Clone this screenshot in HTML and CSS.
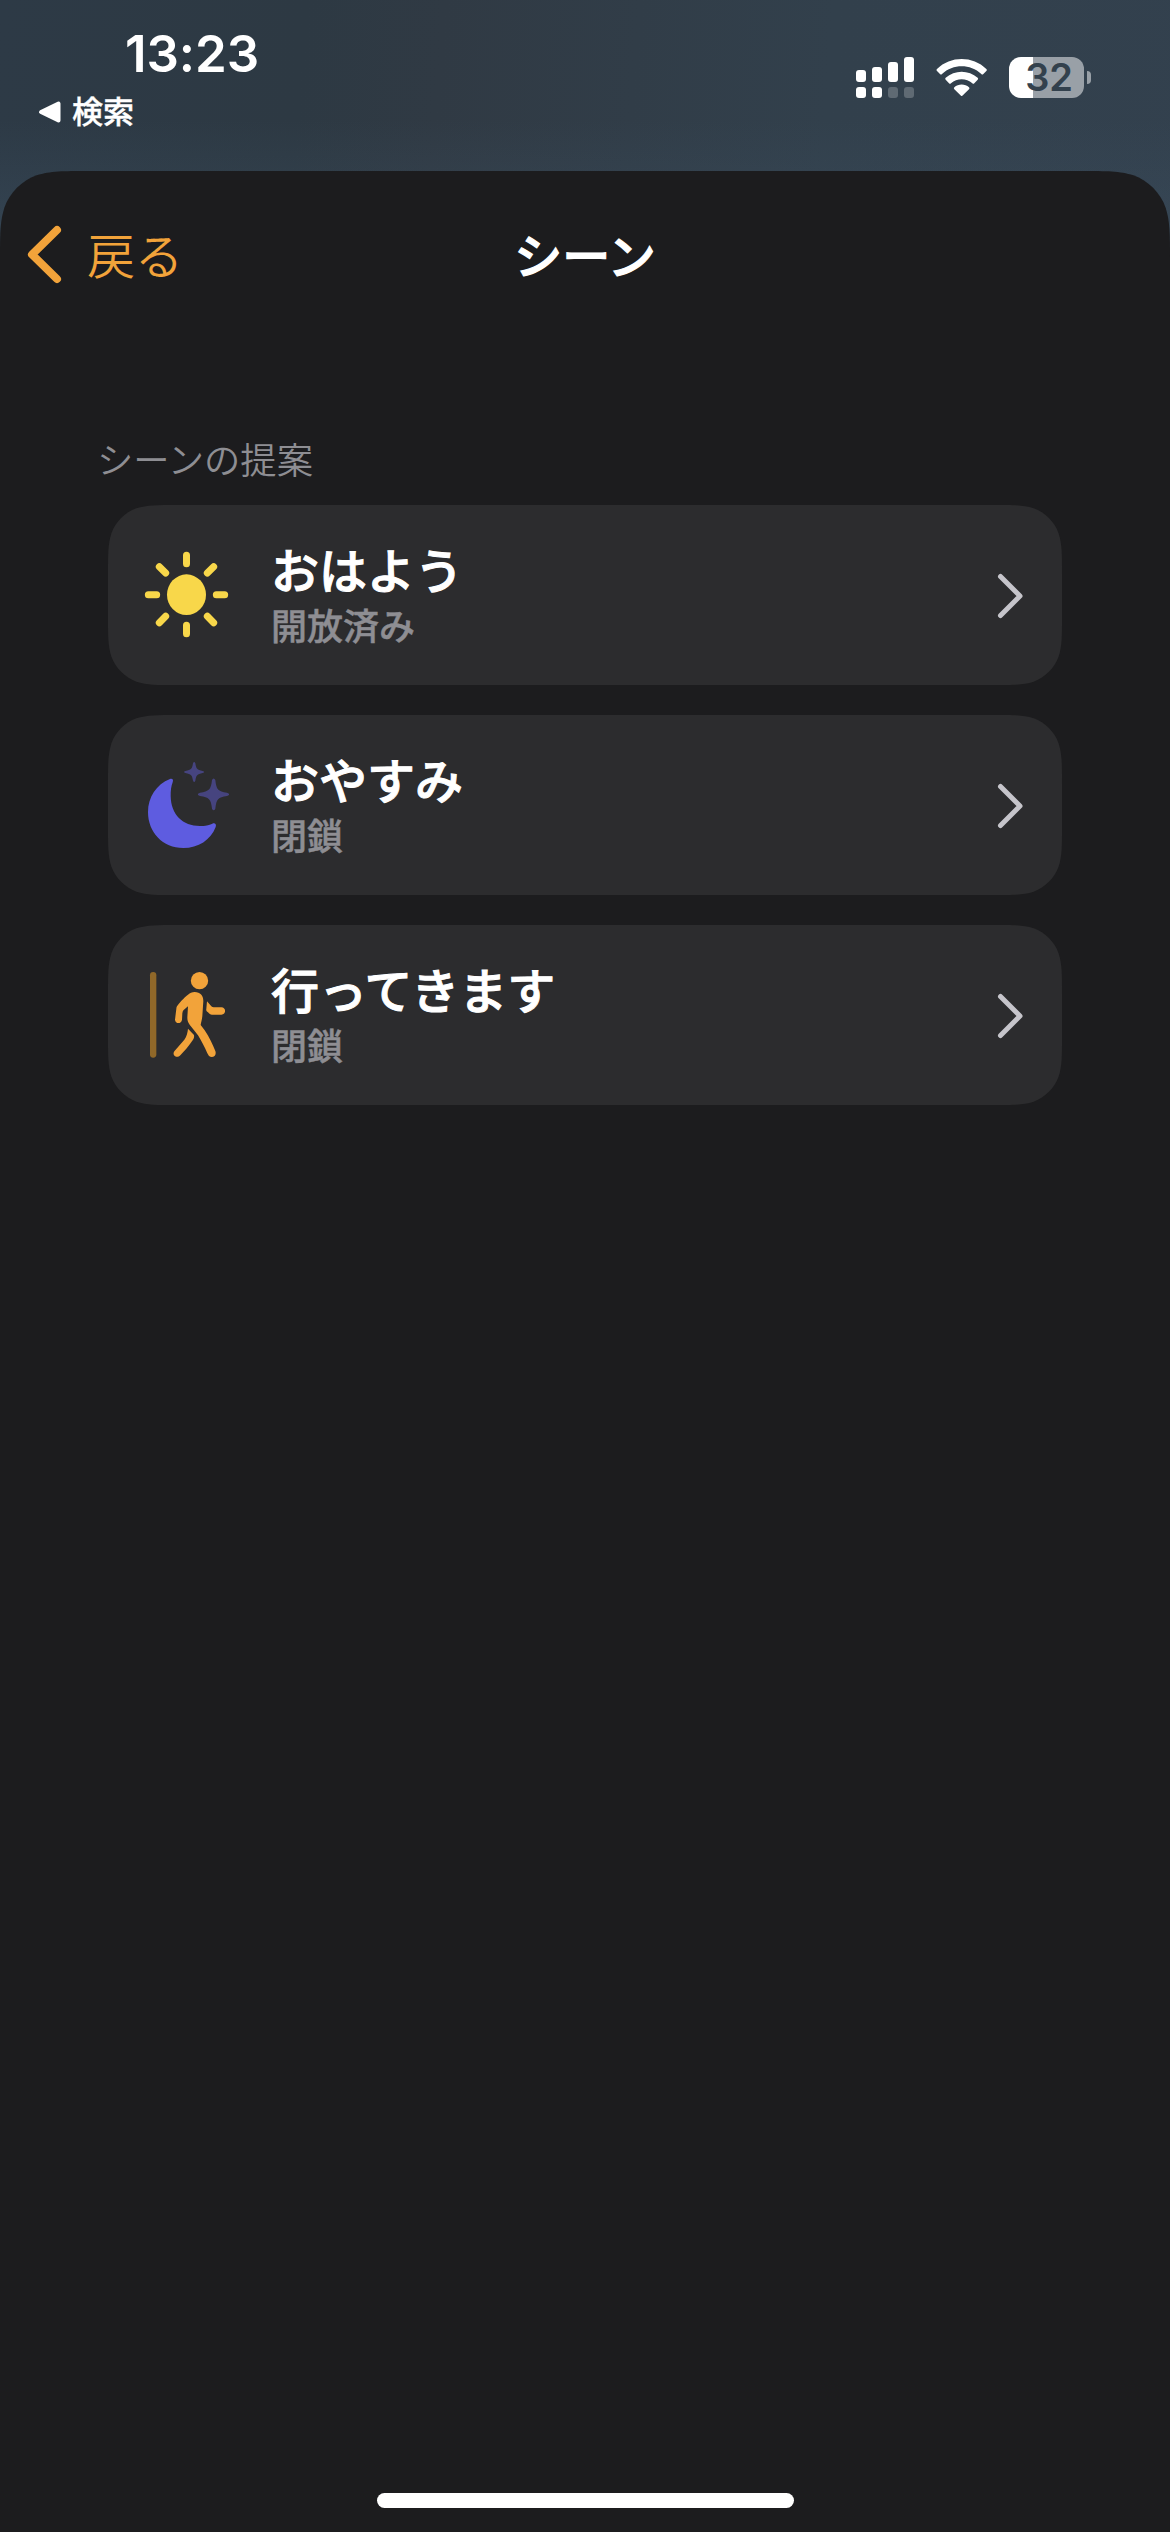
FILE: index.html
```html
<!DOCTYPE html>
<html lang="ja">
<head>
<meta charset="utf-8">
<title>シーン</title>
<link rel="stylesheet" href="styles.css">
</head>
<body>
<div class="screen">
  <header class="status">
    <div class="status-left">
      <div class="clock">13:23</div>
      <div class="return">
        <svg width="24" height="24" viewBox="0 0 24 24"><path d="M3 12 L20.500 3.500 V20.500 Z" fill="#fff" stroke="#fff" stroke-width="4" stroke-linejoin="round"/></svg>
        <span>検索</span>
      </div>
    </div>
    <div class="status-right">
      <svg width="58" height="41" viewBox="0 0 58 41" fill="#fff">
        <rect x="0" y="13" width="10" height="12" rx="3"/><rect x="16" y="10" width="10" height="15" rx="3"/><rect x="32" y="5" width="10" height="20" rx="3"/><rect x="48" y="0" width="10" height="25" rx="3"/>
        <rect x="0" y="30" width="10" height="11" rx="3"/><rect x="16" y="30" width="10" height="11" rx="3"/><rect x="32" y="30" width="10" height="11" rx="3" opacity=".22"/><rect x="48" y="30" width="10" height="11" rx="3" opacity=".22"/>
      </svg>
      <svg class="wifi" width="51" height="41" viewBox="468 171 153 123" fill="#fff">
        <path d="M471 207 C512 167 578 167 619 207 Q622 210 619 213 L610 222 Q607 225 604 222 C571 191 519 191 486 222 Q483 225 480 222 L471 213 Q468 210 471 207Z"/>
        <path d="M497 233 C524 209 566 209 593 233 Q596 236 593 239 L583 250 Q580 253 577 250 C559 234 531 234 513 250 Q510 253 507 250 L497 239 Q494 236 497 233Z"/>
        <path d="M523 262 C535 251 555 251 567 262 Q570 265 567 268 L547 287 Q545 289 543 287 L523 268 Q520 265 523 262Z"/>
      </svg>
      <div class="battery"><div class="battery-body">32</div><div class="battery-tip"></div></div>
    </div>
  </header>
  <main class="sheet">
    <nav class="nav">
      <div class="back">
        <svg width="38" height="62" viewBox="0 0 38 62"><path d="M31 7 L6 31.500 L31 56" fill="none" stroke="#f2a33a" stroke-width="8" stroke-linecap="round" stroke-linejoin="round"/></svg>
        <span>戻る</span>
      </div>
      <h1 class="title">シーン</h1>
    </nav>
    <section class="scenes">
      <h2 class="label">シーンの提案</h2>
      <div class="card">
        <svg class="icon" viewBox="186 390 270 270">
          <ellipse cx="319.500" cy="524" rx="58.500" ry="61" fill="#f8d74a"/>
          <path d="M319.500 406 V431 M319.500 616 V641 M205 524 H230 M409 524 H434 M238 440 L257 459 M401 440 L382 459 M238 608 L257 589 M401 608 L382 589" stroke="#f8d74a" stroke-width="21" stroke-linecap="round"/>
        </svg>
        <div class="text"><div class="name">おはよう</div><div class="state">開放済み</div></div>
        <svg class="chevron" viewBox="0 0 30 50"><path d="M4.500 6.500 L24 26 L4.500 45.500"/></svg>
      </div>
      <div class="card">
        <svg class="icon" viewBox="66 120 270 270">
          <path d="M150 177 C158 175 161 180 158 187 C153 200 152 213 152 228 C153 284 188 318 240 318 C256 318 267 315 277 311 C285 308 290 313 287 321 C272 360 235 384 190 384 C128 384 84 337 84 276 C84 232 109 193 150 177Z" fill="#5e5ce0"/>
          <g fill="#46447f">
            <path d="M219 130 Q222.500 122 226 130 C229 148 231 149 248 153 Q257 156.500 248 159 C231 163 229 165 226 182 Q222.500 190 219 182 C216 165 214 163 196 159 Q188 156.500 196 153 C214 149 216 148 219 130Z"/>
            <path d="M276 180 Q281 171 286 180 C289 209 294 214 321 218 Q334 223 321 228 C294 232 289 237 286 266 Q281 275 276 266 C273 237 267 232 240 228 Q227 223 240 218 C267 214 273 209 276 180Z"/>
          </g>
        </svg>
        <div class="text"><div class="name">おやすみ</div><div class="state">閉鎖</div></div>
        <svg class="chevron" viewBox="0 0 30 50"><path d="M4.500 6.500 L24 26 L4.500 45.500"/></svg>
      </div>
      <div class="card">
        <svg class="icon" viewBox="66 120 270 270">
          <rect x="90" y="126" width="19" height="257" rx="9.500" fill="#906829"/>
          <g fill="#f2a33a">
            <circle cx="238.500" cy="152" r="26"/>
            <path d="M224 186 C241 186 250 197 250 213 L247 258 C246 270 243 277 242 285 L254 301 C268 322 279 345 286 363 C291 376 278 386 267 378 L262 370 C254 350 244 333 234 316 L209 284 C203 276 202 270 202 262 L204 229 L191 240 C188 243 188 246 187 250 L186 269 C184 283 166 282 165 269 L169 236 C169 231 172 227 176 222 C186 210 202 193 213 188 Q218 186 224 186Z"/>
            <path d="M204 296 L222 315 C223 321 222 325 218 331 C207 348 194 362 181 376 C170 387 155 376 163 364 L193 329 C200 320 203 307 204 296Z"/>
            <path d="M261 214 L274 229 Q277 232 281 232 L304 232 C319 232 319 254 304 254 L276 254 C271 254 268 251 264 247 C259 243 258 241 259 236Z"/>
          </g>
        </svg>
        <div class="text"><div class="name">行ってきます</div><div class="state">閉鎖</div></div>
        <svg class="chevron" viewBox="0 0 30 50"><path d="M4.500 6.500 L24 26 L4.500 45.500"/></svg>
      </div>
    </section>
    <div class="home"></div>
  </main>
</div>
</body>
</html>
```
FILE: styles.css
```css
* { box-sizing: border-box; margin: 0; }
body { background: #2e3a44; font-family: "Noto Sans CJK JP", sans-serif; color: #fff; }
svg { display: block; flex: none; }
.screen {
  width: 1170px; height: 2532px; display: flex; flex-direction: column;
  background: linear-gradient(180deg, rgba(58,76,92,0) 0, rgba(58,76,92,0) 120px, rgba(58,76,92,.6) 250px),
    linear-gradient(95deg, #2d3a46 0, #2d3943 22%, #303a44 32%, #32404c 60%, #33414f 100%);
}
.status { height: 171px; display: flex; justify-content: space-between; }
.status-left { padding: 24px 0 0 38px; }
.clock { padding-left: 87px; font: 600 51px/60px Inter, sans-serif; letter-spacing: -0.1px; }
.return { display: flex; align-items: center; gap: 10px; margin-top: 6px; font-size: 31px; line-height: 40px; font-weight: 500; -webkit-text-stroke: 0.4px; }
.return svg { margin-top: 3px; }
.status-right { display: flex; padding: 57px 79px 0 0; height: 98px; }
.wifi { margin: 0 22px; }
.battery { display: flex; align-items: center; gap: 3px; }
.battery-body {
  width: 75px; height: 41px; border-radius: 12px; padding-left: 5px; text-align: center;
  background: linear-gradient(90deg, #fff 24px, #99a0a7 24px);
  color: #33414d; font: 600 38px/41px Inter, sans-serif; letter-spacing: -0.3px;
}
.battery-tip { width: 4px; height: 13px; border-radius: 0 6px 6px 0; background: #99a0a7; }
.sheet {
  flex: 1; display: flex; flex-direction: column; background: #1c1c1e;
  clip-path: path("M0 88.660 C0 63.130 0 50.370 4.340 36.630 C9.810 21.620 21.620 9.810 36.630 4.340 C50.370 0 63.130 0 88.660 0 H1081.340 C1106.870 0 1119.630 0 1133.370 4.340 C1148.380 9.810 1160.190 21.620 1165.660 36.630 C1170 50.370 1170 63.130 1170 88.660 V2361 H0Z");
}
.nav { height: 163px; display: grid; grid-template-columns: 1fr auto 1fr; align-items: center; padding: 0 26px; line-height: 68px; }
.back { display: flex; align-items: center; gap: 23px; color: #f2a33a; font-size: 48px; font-weight: 350; }
.back svg { margin-top: 3px; }
.title { font-size: 48px; font-weight: 500; -webkit-text-stroke: 1.2px; }
.scenes { padding: 94px 108px 0; display: flex; flex-direction: column; gap: 30px; }
.label { margin: 0 0 -10px -11px; font-size: 36.3px; line-height: 60px; height: 57px; font-weight: 350; color: #8e8e93; }
.card {
  height: 180px; display: flex; align-items: center; padding: 0 36px 0 34px; background: #2c2c2e;
  clip-path: path("M0 68.790 C0 48.980 0 39.080 3.370 28.420 C7.610 16.780 16.780 7.610 28.420 3.370 C39.080 0 48.980 0 68.790 0 H885.210 C905.020 0 914.920 0 925.580 3.370 C937.220 7.610 946.390 16.780 950.630 28.420 C954 39.080 954 48.980 954 68.790 V111.210 C954 131.020 954 140.920 950.630 151.580 C946.390 163.220 937.220 172.390 925.580 176.630 C914.920 180 905.020 180 885.210 180 H68.790 C48.980 180 39.080 180 28.420 176.630 C16.780 172.390 7.610 163.220 3.370 151.580 C0 140.920 0 131.020 0 111.210Z");
}
.icon { width: 90px; height: 90px; }
.text { flex: 1; margin-left: 39px; }
.name { font-size: 48px; line-height: 58px; font-weight: 500; -webkit-text-stroke: 1px; }
.state { font-size: 36px; line-height: 54px; font-weight: 500; -webkit-text-stroke: 0.5px; color: #8e8e93; }
.chevron { width: 30px; height: 50px; fill: none; stroke: #c6c5cb; stroke-width: 5; stroke-linecap: round; stroke-linejoin: round; }
.home { width: 417px; height: 15px; border-radius: 8px; background: #fff; margin: auto auto 24px 377px; }
```
